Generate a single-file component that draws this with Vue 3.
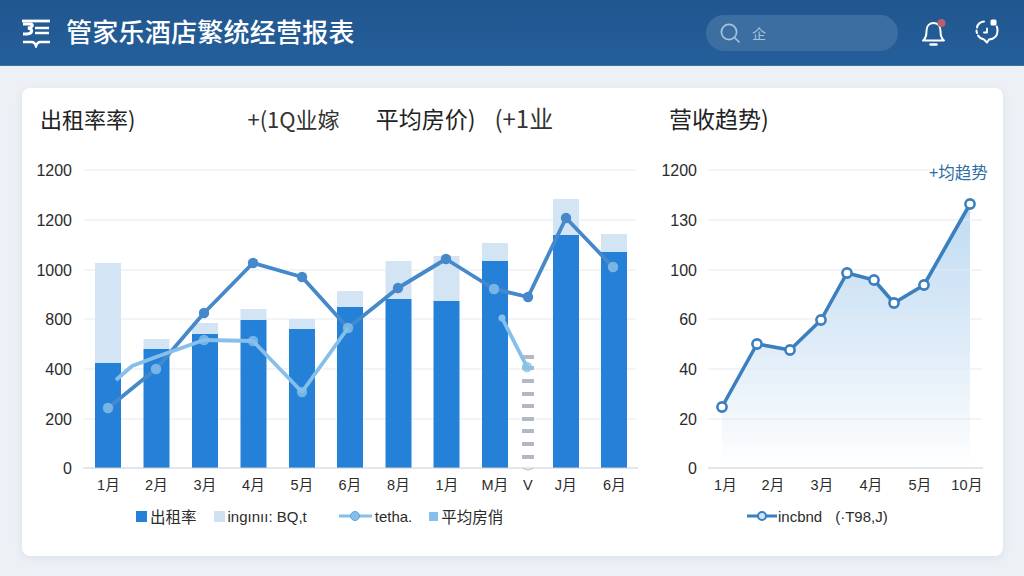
<script setup>
const gridL = [170, 220, 270, 319, 369, 419]
const yL = [
  { t: '1200', y: 170 }, { t: '1200', y: 220 }, { t: '1000', y: 270 }, { t: '800', y: 319 },
  { t: '400', y: 369 }, { t: '200', y: 419 }, { t: '0', y: 468 },
]
const bars = [
  { x: 108, d: 363, l: 263 }, { x: 156.5, d: 349, l: 339 }, { x: 205, d: 334, l: 323 },
  { x: 253.5, d: 320, l: 309 }, { x: 302, d: 329, l: 319 }, { x: 350, d: 307, l: 291 },
  { x: 398.5, d: 299, l: 261 }, { x: 446.5, d: 301, l: 256 }, { x: 495, d: 261, l: 243 },
  { x: 566, d: 235, l: 199 }, { x: 614, d: 252, l: 234 },
]
const xL = [
  { t: '1月', x: 108.5 }, { t: '2月', x: 156.5 }, { t: '3月', x: 205 }, { t: '4月', x: 253.5 },
  { t: '5月', x: 302 }, { t: '6月', x: 350 }, { t: '8月', x: 398.5 }, { t: '1月', x: 447 },
  { t: 'M月', x: 495 }, { t: 'V', x: 528 }, { t: 'J月', x: 566 }, { t: '6月', x: 614.5 },
]
const dark = [[108,408],[156,369],[204,313],[253,263],[302,277],[348,328],[398,288],[446,259],[494,289],[528,297],[566,218],[613,267]]
const light1 = [[116,380],[132,366],[156,357],[204,340],[253,341],[302,392],[348,328]]
const light2 = [[502,318],[527,367]]
const lightDots = [[108,408],[156,369],[204,340],[253,341],[302,392],[348,328],[494,289],[613,267],[527,367]]
const dashes = [357, 368, 381, 394, 406, 419, 431, 444, 457]
const pts = (a) => a.map((p) => p.join(',')).join(' ')

const yR = [
  { t: '1200', y: 170 }, { t: '130', y: 220 }, { t: '100', y: 270 }, { t: '60', y: 319 },
  { t: '40', y: 369 }, { t: '20', y: 419 }, { t: '0', y: 468 },
]
const xR = [
  { t: '1月', x: 725.5 }, { t: '2月', x: 773 }, { t: '3月', x: 822 },
  { t: '4月', x: 871 }, { t: '5月', x: 920 }, { t: '10月', x: 967 },
]
const rev = [[722,407],[757,344],[790,350],[821,320],[847,273],[874,280],[894,303],[924,285],[970,204]]
const area = `722,468 ${pts(rev)} 970,468`
</script>

<template>
  <div class="page">
    <header class="top">
      <svg class="logo" width="30" height="30" viewBox="0 0 30 30" fill="none" stroke="#fff">
        <path d="M1 3H29" stroke-width="2.800" />
        <path d="M2 6H10C12.500 7 11.500 9.500 7 10C12 11 12 15.500 6 16H2" stroke-width="3" />
        <path d="M14 10H28M14 15H28" stroke-width="2.400" />
        <path d="M2 24H11C13 24 14 25 15 28C16 25 17 24 19 24H29" stroke-width="2.400" />
      </svg>
      <h1 class="brand">管家乐酒店繁统经营报表</h1>
      <div class="search">
        <svg width="22" height="22" viewBox="0 0 22 22" fill="none" stroke="#a6c2dc" stroke-width="1.700">
          <circle cx="10" cy="10" r="7.600" />
          <path d="M15.500 15.500L20 20" stroke-linecap="round" />
        </svg>
        <span class="search-text">企</span>
      </div>
      <svg class="bell" width="26" height="28" viewBox="0 0 26 28" fill="none" stroke="#fff" stroke-width="2" stroke-linecap="round" stroke-linejoin="round">
        <path d="M2 21.500C5 19.500 5.500 16.500 5.500 12C5.500 7 8.500 4 12.500 4C16.500 4 19.500 7 19.500 12C19.500 16.500 20 19.500 23 21.500Z" />
        <path d="M9.500 25.500H15.500" stroke-width="2.400" />
        <circle cx="20.500" cy="4" r="4" fill="#b8606f" stroke="none" />
      </svg>
      <svg class="assist" width="24" height="28" viewBox="0 0 24 28" fill="none" stroke="#fff" stroke-width="2" stroke-linecap="round" stroke-linejoin="round">
        <path d="M9 3.500C5 4 2.500 6.500 2 9.500" />
        <path d="M1.500 12.500C1.500 13.500 1.500 14 2 15" />
        <path d="M3 17.500C4.500 20 6.500 21 9 21.500L12 24.500L14 21.500C19.500 21 22.500 17.500 22.500 13C22.500 11 22.300 10 21.800 8.500" />
        <path d="M12 10.500V14.500H9" stroke-width="1.800" />
        <rect x="15.500" y="1.500" width="6" height="6" rx="1.500" fill="#fff" stroke="none" />
      </svg>
    </header>

    <main class="body">
      <section class="card">
        <div class="panel left">
          <div class="titles">
            <span class="t1">出租率率)</span>
            <span class="t2">+(1Q业嫁</span>
            <span class="t3">平均房价)</span>
            <span class="t4">(+1业</span>
          </div>
          <svg class="chart" width="628" height="342" viewBox="22 158 628 342">
            <line v-for="y in gridL" :key="y" x1="84" x2="636" :y1="y" :y2="y" class="grid" />
            <g v-for="b in bars" :key="b.x">
              <rect :x="b.x - 13" :y="b.l" width="26" :height="b.d - b.l" fill="#d3e4f4" />
              <rect :x="b.x - 13" :y="b.d" width="26" :height="468 - b.d" fill="#2581d8" />
            </g>
            <line x1="83" x2="638" y1="468" y2="468" class="axis" />
            <rect v-for="d in dashes" :key="d" x="522" :y="d - 2" width="12" height="4" fill="#b2b8c4" />
            <path d="M523 468Q528 472 533 468" fill="none" stroke="#b2b8c4" stroke-width="1" />
            <polyline :points="pts(dark)" fill="none" stroke="#4589cb" stroke-width="3.800" stroke-linejoin="round" />
            <circle v-for="p in dark" :key="p[0]" :cx="p[0]" :cy="p[1]" r="5.200" fill="#4589cb" />
            <polyline :points="pts(light1)" fill="none" stroke="#86c0ea" stroke-width="3.800" stroke-linejoin="round" />
            <polyline :points="pts(light2)" fill="none" stroke="#86c0ea" stroke-width="3.800" />
            <circle cx="502" cy="318" r="3.500" fill="#86c0ea" />
            <circle v-for="p in lightDots" :key="p[0]" :cx="p[0]" :cy="p[1]" r="5.200" fill="#86c0ea" fill-opacity="0.8" />
            <text v-for="(l, i) in yL" :key="i" x="72" :y="l.y + 6" text-anchor="end" class="tick">{{ l.t }}</text>
            <text v-for="(l, i) in xL" :key="i" :x="l.x" y="490" text-anchor="middle" class="tick label">{{ l.t }}</text>
          </svg>
          <div class="legend legend-left">
            <span class="key"><i class="sq dark"></i><b class="cjk">出租率</b></span>
            <span class="key"><i class="sq pale"></i><b>ingınıı: BQ,t</b></span>
            <span class="key"><svg width="33" height="12" viewBox="0 0 33 12"><path d="M0 6H33" stroke="#86c0ea" stroke-width="3" /><circle cx="16" cy="6" r="4.500" fill="#86c0ea" stroke="#5ea6dc" /></svg><b>tetha.</b></span>
            <span class="key"><i class="sq sky"></i><b class="cjk">平均房俏</b></span>
          </div>
        </div>
        <div class="panel right">
          <div class="titles">
            <span class="t5">营收趋势)</span>
          </div>
          <svg class="chart" width="353" height="342" viewBox="650 158 353 342">
            <defs>
              <linearGradient id="rev-fill" x1="0" y1="0" x2="0" y2="1">
                <stop offset="0" stop-color="#c0dcf2" />
                <stop offset="0.45" stop-color="#d9e9f7" />
                <stop offset="0.75" stop-color="#eef5fb" />
                <stop offset="1" stop-color="#ffffff" />
              </linearGradient>
            </defs>
            <polygon :points="area" fill="url(#rev-fill)" />
            <line v-for="y in gridL" :key="y" x1="708" :x2="y === 170 ? 930 : 982" :y1="y" :y2="y" class="grid" />
            <line x1="708" x2="983" y1="468" y2="468" class="axis" />
            <polyline :points="pts(rev)" fill="none" stroke="#3b7fbe" stroke-width="3.600" stroke-linejoin="round" />
            <circle v-for="p in rev" :key="p[0]" :cx="p[0]" :cy="p[1]" r="4.600" fill="#fff" stroke="#3b7fbe" stroke-width="2.600" />
            <text v-for="(l, i) in yR" :key="i" x="697" :y="l.y + 6" text-anchor="end" class="tick">{{ l.t }}</text>
            <text v-for="(l, i) in xR" :key="i" :x="l.x" y="490" text-anchor="middle" class="tick label">{{ l.t }}</text>
            <text x="929" y="179" class="trend">+均趋势</text>
          </svg>
          <div class="legend legend-right">
            <span class="key"><svg width="30" height="12" viewBox="0 0 30 12"><path d="M0 6H30" stroke="#3b7fbe" stroke-width="3" /><circle cx="15" cy="6" r="4" fill="#cfe3f4" stroke="#3b7fbe" stroke-width="2" /></svg><b>incbnd</b></span>
            <span class="key"><b>(·T98,J)</b></span>
          </div>
        </div>
      </section>
    </main>
  </div>
</template>

<style>
body { margin: 0; }
</style>

<style scoped>
.page {
  width: 1024px;
  height: 576px;
  overflow: hidden;
  background: #edf1f6;
  font-family: "Liberation Sans", "Noto Sans CJK SC", sans-serif;
  color: #222;
}
.top {
  height: 66px;
  box-sizing: border-box;
  display: flex;
  align-items: center;
  padding: 0 25px 0 21px;
  background: linear-gradient(180deg, #20568f 0%, #255f9b 100%);
  border-bottom: 1px solid #3a72a8;
}
.logo { flex: none; }
.brand {
  margin: 0 0 3px 15px;
  font: 500 26px/1 "Noto Sans CJK SC", sans-serif;
  letter-spacing: 0.25px;
  color: #fff;
  white-space: nowrap;
  flex: none;
}
.search {
  margin-left: auto;
  width: 192px;
  height: 36px;
  box-sizing: border-box;
  display: flex;
  align-items: center;
  padding: 0 0 0 13px;
  gap: 11px;
  border-radius: 18px;
  background: #3c6ea2;
}
.search-text {
  font: 400 14px/1 "Noto Sans CJK SC", sans-serif;
  color: #a6c2dc;
}
.bell { margin-left: 23px; flex: none; }
.assist { margin-left: 28px; margin-bottom: 1px; flex: none; }
.body { padding: 22px 21px 20px 22px; }
.card {
  height: 468px;
  display: flex;
  background: #fff;
  border-radius: 8px;
  box-shadow: 0 2px 8px rgba(120, 145, 175, 0.16);
  overflow: hidden;
}
.panel { display: flex; flex-direction: column; }
.left { width: 628px; flex: none; }
.right { flex: 1; min-width: 0; }
.titles {
  height: 70px;
  display: flex;
  align-items: center;
  font: 400 22px/1 "Noto Sans CJK SC", sans-serif;
  color: #222;
  white-space: nowrap;
  box-sizing: border-box;
  padding-bottom: 10px;
}
.t1 { margin-left: 18px; }
.t2 { margin-left: 112px; color: #333; }
.t3 { margin-left: 36px; font-size: 23px; }
.t4 { margin-left: 19px; font-size: 24px; color: #333; }
.t5 { margin-left: 19px; font-size: 23px; }
.chart { display: block; flex: none; }
.tick { font: 400 16px "Liberation Sans", "Noto Sans CJK SC", sans-serif; fill: #2b2b2b; }
.label { font-size: 14.500px; letter-spacing: 0.300px; }
.trend { font: 400 16.500px "Noto Sans CJK SC", sans-serif; fill: #2f6ea5; }
.grid { stroke: #e6e9ec; stroke-width: 1; }
.axis { stroke: #c6ccd4; stroke-width: 1; }
.legend {
  display: flex;
  align-items: center;
  height: 32px;
  font-size: 15px;
  color: #2b2b2b;
  white-space: nowrap;
}
.legend b { font-weight: 400; }
.legend .cjk { font-size: 15.500px; }
.legend-left { padding-left: 114px; gap: 17px; }
.legend-left .key:nth-child(3) { margin-left: 15px; }
.legend-right { padding-left: 97px; gap: 13px; }
.legend-right .key { gap: 1px; }
.key { display: inline-flex; align-items: center; gap: 3px; }
.sq { display: block; width: 11px; height: 11px; flex: none; }
.sq.dark { background: #2581d8; }
.sq.pale { background: #cfe2f4; }
.sq.sky { width: 9px; height: 9px; background: #86c0ea; }
</style>
